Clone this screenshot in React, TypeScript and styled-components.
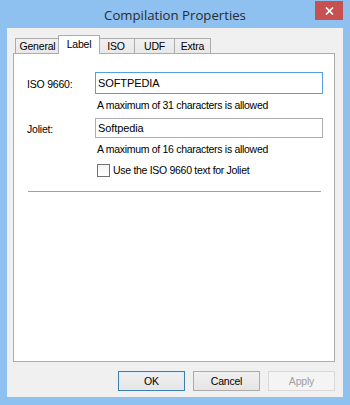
import styled, { createGlobalStyle } from 'styled-components';

const GlobalStyle = createGlobalStyle`
  html, body {
    margin: 0;
    padding: 0;
    background: #8ec0f0;
  }
  * {
    box-sizing: border-box;
  }
`;

const Window = styled.div`
  width: 350px;
  height: 405px;
  background-color: #8ec0f0;
  display: flex;
  flex-direction: column;
  padding: 0 7px 8px 7px;
  font-family: "Liberation Sans", Arial, sans-serif;
  font-size: 10.5px;
  color: #000;
`;

const TitleBar = styled.div`
  height: 28px;
  display: grid;
  grid-template-columns: 1fr auto 1fr;
  align-items: start;
`;

const Title = styled.div`
  grid-column: 2;
  margin-top: 5px;
  font-family: "Open Sans", "Noto Sans", sans-serif;
  font-size: 13.2px;
  line-height: 20px;
  color: #2b2b2b;
`;

const CloseButton = styled.div`
  grid-column: 3;
  justify-self: end;
  width: 28px;
  height: 19px;
  margin-top: 1px;
  background-color: #c75050;
  display: flex;
  align-items: center;
  justify-content: center;
`;

const Client = styled.div`
  flex: 1;
  background-color: #f0f0f0;
  display: flex;
  flex-direction: column;
  padding: 7px 8px 6px 6px;
`;

const TabStrip = styled.div`
  height: 19px;
  display: flex;
  align-items: flex-end;
  padding-left: 2px;
  position: relative;
  z-index: 1;
`;

const Tab = styled.div<{ $active?: boolean; $width: number }>`
  width: ${p => (p.$active ? p.$width + 4 : p.$width)}px;
  height: ${p => (p.$active ? 19 : 16)}px;
  margin: ${p => (p.$active ? '0 -2px 0 -2px' : '0 0 0 -1px')};
  border: 1px solid #acacac;
  border-bottom: ${p => (p.$active ? 'none' : '1px solid #acacac')};
  background: ${p => (p.$active ? '#ffffff' : 'linear-gradient(#f0f0f0, #e8e8e8)')};
  display: flex;
  justify-content: center;
  padding-top: ${p => (p.$active ? 2 : 1)}px;
  line-height: 13px;
  letter-spacing: -0.2px;
  position: relative;
  z-index: ${p => (p.$active ? 2 : 1)};

  &:first-child {
    margin-left: 0;
  }
`;

const Panel = styled.div`
  flex: 1;
  margin-top: -1px;
  background-color: #ffffff;
  border: 1px solid #acacac;
  padding: 18px 11px 0 13px;
  display: flex;
  flex-direction: column;
`;

const FieldRow = styled.div<{ $gap: number }>`
  display: grid;
  grid-template-columns: 68px 1fr;
  margin-top: ${p => p.$gap}px;
`;

const FieldLabel = styled.div<{ $height: number }>`
  height: ${p => p.$height}px;
  display: flex;
  align-items: center;
  padding-top: 2px;
  letter-spacing: -0.2px;
`;

const TextBox = styled.div<{ $focused?: boolean; $height: number }>`
  height: ${p => p.$height}px;
  border: 1px solid ${p => (p.$focused ? '#569de5' : '#abadb3')};
  background: #fff;
  display: flex;
  align-items: center;
  padding-left: 2px;
  font-size: 11px;
  letter-spacing: -0.1px;
`;

const Hint = styled.div`
  grid-column: 2;
  margin-top: 5px;
  padding-left: 2px;
  line-height: 13px;
  letter-spacing: -0.3px;
`;

const CheckRow = styled.label`
  grid-column: 2;
  margin-top: 8px;
  padding-left: 2px;
  display: flex;
  align-items: center;
  gap: 3px;
  line-height: 13px;
  letter-spacing: -0.3px;
`;

const CheckBox = styled.span`
  width: 13px;
  height: 13px;
  border: 1px solid #707070;
  background: linear-gradient(#f4f4f4, #ffffff);
  display: inline-block;
`;

const Separator = styled.div`
  margin: 14px 2px 0 1px;
  height: 2px;
  border-top: 1px solid #a0a0a0;
  border-bottom: 1px solid #ffffff;
`;

const ButtonRow = styled.div`
  margin-top: 9px;
  display: flex;
  justify-content: flex-end;
  gap: 8px;
`;

const Button = styled.div<{ $variant?: 'default' | 'disabled' }>`
  width: 67px;
  height: 20px;
  display: flex;
  align-items: center;
  justify-content: center;
  letter-spacing: -0.2px;
  border: 1px solid
    ${p =>
      p.$variant === 'default' ? '#3c7fb1' : p.$variant === 'disabled' ? '#d9d9d9' : '#acacac'};
  background: ${p =>
    p.$variant === 'disabled' ? '#f4f4f4' : 'linear-gradient(#f0f0f0, #e5e5e5)'};
  color: ${p => (p.$variant === 'disabled' ? '#a0a0a0' : '#000')};
  box-shadow: ${p => (p.$variant === 'default' ? 'inset 0 0 0 1px #dcecfc' : 'none')};
`;

const tabs = [
  { label: 'General', width: 45 },
  { label: 'Label', width: 38, active: true },
  { label: 'ISO', width: 38 },
  { label: 'UDF', width: 41 },
  { label: 'Extra', width: 37 },
];

export default function App() {
  return (
    <>
      <GlobalStyle />
      <Window>
        <TitleBar>
          <Title>Compilation Properties</Title>
          <CloseButton>
            <svg width="9" height="8" viewBox="0 0 9 8">
              <path d="M1 0.5 L8 7.5 M8 0.5 L1 7.5" stroke="#ffffff" strokeWidth="1.7" />
            </svg>
          </CloseButton>
        </TitleBar>
        <Client>
          <TabStrip>
            {tabs.map(t => (
              <Tab key={t.label} $active={t.active} $width={t.width}>
                {t.label}
              </Tab>
            ))}
          </TabStrip>
          <Panel>
            <FieldRow $gap={0}>
              <FieldLabel $height={22}>ISO 9660:</FieldLabel>
              <TextBox $focused $height={22}>SOFTPEDIA</TextBox>
              <Hint>A maximum of 31 characters is allowed</Hint>
            </FieldRow>
            <FieldRow $gap={6}>
              <FieldLabel $height={20}>Joliet:</FieldLabel>
              <TextBox $height={20}>Softpedia</TextBox>
              <Hint>A maximum of 16 characters is allowed</Hint>
              <CheckRow>
                <CheckBox />
                Use the ISO 9660 text for Joliet
              </CheckRow>
            </FieldRow>
            <Separator />
          </Panel>
          <ButtonRow>
            <Button $variant="default">OK</Button>
            <Button>Cancel</Button>
            <Button $variant="disabled">Apply</Button>
          </ButtonRow>
        </Client>
      </Window>
    </>
  );
}
